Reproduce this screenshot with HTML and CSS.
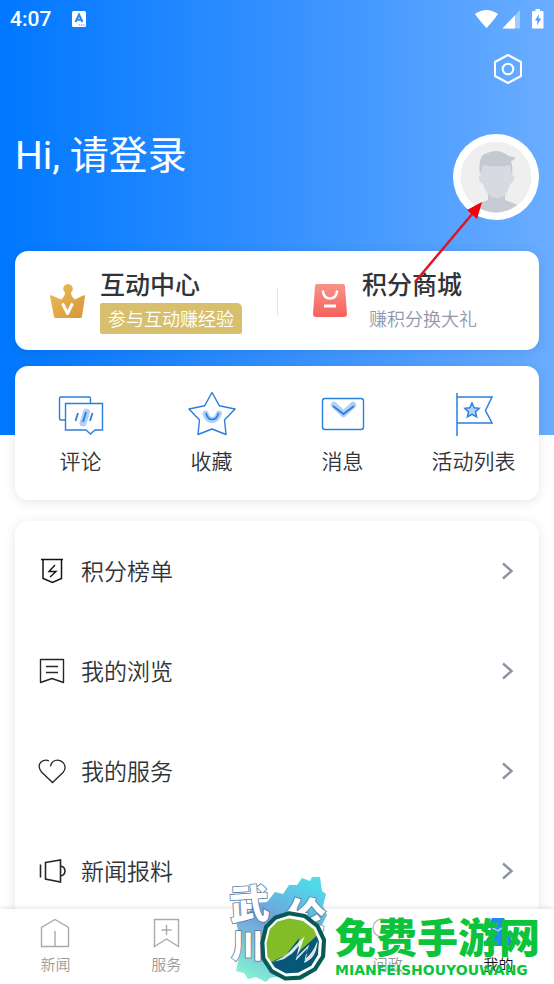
FILE: index.html
```html
<!DOCTYPE html>
<html lang="zh-CN">
<head>
<meta charset="utf-8">
<meta name="viewport" content="width=device-width, initial-scale=1">
<title>我的</title>
<link rel="stylesheet" href="styles.css">
</head>
<body>
<div class="screen">
  <main class="content">
    <div class="status">
      <span class="clock">4:07</span>
      <svg class="status-app" width="16" height="16" viewBox="0 0 16 16"><rect x="1" y="0" width="14" height="16" rx="1.5" fill="#fff"/><path d="M4.500 11 8 3.500 11.500 11M6 8.800h4" fill="none" stroke="#2a84f5" stroke-width="2"/><path d="M8 14h1.200M10.200 14h1.200M12.400 14h1.200" stroke="#2a84f5"/></svg>
      <svg width="69" height="20" viewBox="0 0 69 20"><path d="M0 5Q11.500-3 23 5Q19 11 11.500 19Q4 11 0 5z" fill="#fff"/><path d="M27.500 19.500 45 1v18.500z" fill="#fff" opacity=".4"/><path d="M27.500 19.500 40 6.200v13.300z" fill="#fff"/><path d="M57 3q0-1 1-1h2.500V0h4.500v2h2.500q1 0 1 1v15.500q0 1-1 1H58q-1 0-1-1z" fill="#fff"/><path d="m64 5-4 6.500h2.500L62 16.500l4-7h-2.500z" fill="#4b9af8"/></svg>
    </div>
    <div class="toolbar">
      <button class="icon-button" aria-label="设置"><svg width="32" height="32" viewBox="0 0 32 32" fill="none" stroke="#fff" stroke-width="2"><path d="M16 2 29 9v14l-13 7L3 23V9z" stroke-linejoin="round"/><circle cx="16" cy="16" r="5.300"/></svg></button>
    </div>
    <header class="profile">
      <h1 class="greeting">Hi, 请登录</h1>
      <a class="avatar" href="#" aria-label="请登录">
        <svg width="86" height="86" viewBox="0 0 86 86"><defs><clipPath id="face"><circle cx="43" cy="43" r="35.500"/></clipPath></defs><circle cx="43" cy="43" r="43" fill="#fff"/><circle cx="43" cy="43" r="35.500" fill="#efeff0"/><g clip-path="url(#face)"><path d="M17 86V76q4-5 10-7l8-3V55h17v11l8 3q6 2 10 7v10z" fill="#c7cbd3"/><path d="M28 30h31v11q3 0 2 4t-4 5q-3 14-13 14T30 50q-3-1-4-5t2-4z" fill="#d7dae0"/><path d="M27 41q-3-20 7-22 10-4 17 0 5 4 11 4-1 4-4 4 2 7 1 14l-2-10q-16 3-27 0z" fill="#c4c9d1"/></g></svg>
      </a>
    </header>

    <section class="card promo">
      <a class="promo-item" href="#">
        <svg width="36" height="36" viewBox="0 0 36 36"><defs><linearGradient id="gold" x2="1" y2="1"><stop stop-color="#ecbd58"/><stop offset="1" stop-color="#d7963a"/></linearGradient></defs><path d="M0 13.500q0-2 2-1l9 4q4-3 4-7a4.800 4.800 0 1 1 6 0q0 4 4 7l8-4q2-1 2 1l-3 20q0 1.500-2 1.500H6q-2 0-2-1.500z" fill="url(#gold)"/><path d="m13 21.500 4.500 9 4.500-9" fill="none" stroke="#fff" stroke-width="3" stroke-linecap="round" stroke-linejoin="round"/></svg>
        <span class="promo-text"><strong class="promo-title">互动中心</strong><span class="promo-badge">参与互动赚经验</span></span>
      </a>
      <a class="promo-item" href="#">
        <svg width="36" height="36" viewBox="0 0 36 36"><defs><linearGradient id="rose" x2="0" y2="1"><stop stop-color="#f89486"/><stop offset="1" stop-color="#f7605f"/></linearGradient></defs><path d="M5 1h26q2 0 2 2l2 28q0 3-3 3H4q-3 0-3-3L3 3q0-2 2-2z" fill="url(#rose)"/><path d="M11 8.500q1 7 7 7t7-7" fill="none" stroke="#fff" stroke-width="2.500" stroke-linecap="round"/><path d="M12 23h12" stroke="#fff" stroke-width="3"/></svg>
        <span class="promo-text"><strong class="promo-title">积分商城</strong><span class="promo-note">赚积分换大礼</span></span>
      </a>
    </section>

    <nav class="card shortcuts" aria-label="快捷入口">
      <a class="shortcut" href="#"><svg width="48" height="48" viewBox="0 0 48 48" fill="none" stroke="#2b7fdc" stroke-width="1.400"><path d="M8 34H4q-1.500 0-1.500-1.500v-20Q2.500 11 4 11h28q1.500 0 1.500 1.500V17"/><path d="M8.500 17.500h37v26.500H38l-4.500 4-4.500-4H8.500z"/><path d="m29.500 26-3.500 11" stroke="#afd0f7" stroke-width="7" stroke-linecap="round"/><path d="m21 27-2.500 8M29 26l-3 10M35.500 27l-2.500 8" stroke-width="1.800"/></svg><span>评论</span></a>
      <a class="shortcut" href="#"><svg width="48" height="48" viewBox="0 0 48 48" fill="none" stroke="#2b7fdc" stroke-width="1.400" stroke-linejoin="round"><path d="m24 6.500 7.300 13.200L47 23 36.500 34l1.500 14.500-14-5.500-14 5.500L11.500 34 1 23l15.700-3.300z"/><path d="M17.500 27.500q2 6.500 6.500 6.500t7-6.500" stroke="#afd0f7" stroke-width="6" stroke-linecap="round"/><path d="M18 27q1.500 6.500 6.200 6.500T30.500 27" stroke-width="1.700"/></svg><span>收藏</span></a>
      <a class="shortcut" href="#"><svg width="48" height="48" viewBox="0 0 48 48" fill="none" stroke="#2b7fdc" stroke-width="1.400"><rect x="3.500" y="12.500" width="41" height="31" rx="2.500"/><path d="m15 19 9.500 9 9.500-9" stroke="#afd0f7" stroke-width="6.500" stroke-linecap="round" stroke-linejoin="round"/><path d="m14 20 10.500 8L35 20" stroke-width="1.800"/></svg><span>消息</span></a>
      <a class="shortcut" href="#"><svg width="48" height="48" viewBox="0 0 48 48" fill="none" stroke="#2b7fdc" stroke-width="1.500"><path d="M7 7v43M7 11h35l-6.500 13.500L42 37H7"/><path d="m22 17 2.200 4.700 5 .6-3.600 3.500 1 5-4.600-2.500-4.600 2.500 1-5-3.600-3.500 5-.6z" fill="#afd0f7"/></svg><span>活动列表</span></a>
    </nav>

    <nav class="card menu" aria-label="我的功能">
      <a class="row" href="#"><svg width="28" height="28" viewBox="0 0 28 28" fill="none" stroke="#151515" stroke-width="1.500"><path d="M3 2.500h22M5 2.500v19l9.500 4 9-4v-19"/><path d="m17 8-6 6.500h7l-6 5.500" stroke-width="1.400"/></svg><span class="row-label">积分榜单</span><svg class="chevron" width="12" height="20" viewBox="0 0 12 20"><path d="m1 2.500 8.500 7.500L1 17.500"/></svg></a>
      <a class="row" href="#"><svg width="28" height="28" viewBox="0 0 28 28" fill="none" stroke="#252729" stroke-width="1.400"><path d="M2.500 2.500h23v23l-11.500-4-11.500 4z" stroke-linejoin="round"/><path d="M8 9.500h12M8 15.500h12"/></svg><span class="row-label">我的浏览</span><svg class="chevron" width="12" height="20" viewBox="0 0 12 20"><path d="m1 2.500 8.500 7.500L1 17.500"/></svg></a>
      <a class="row" href="#"><svg width="28" height="28" viewBox="0 0 28 28" fill="none" stroke="#252729" stroke-width="1.300"><path d="M12.500 9.500Q13 5 17 3.500q5-1.500 8.500 2.500 3.500 5-.5 9.500L14.500 25.500 3.500 15Q-1 9 3 5q4-3 8-1"/></svg><span class="row-label">我的服务</span><svg class="chevron" width="12" height="20" viewBox="0 0 12 20"><path d="m1 2.500 8.500 7.500L1 17.500"/></svg></a>
      <a class="row" href="#"><svg width="28" height="28" viewBox="0 0 28 28" fill="none" stroke="#252729" stroke-width="1.600"><path d="M2.500 7.500v13M7.500 5.500 22.500 3v22L7.500 22zM22.500 9q4.500 1 4.500 5t-4.500 5"/></svg><span class="row-label">新闻报料</span><svg class="chevron" width="12" height="20" viewBox="0 0 12 20"><path d="m1 2.500 8.500 7.500L1 17.500"/></svg></a>
    </nav>
  </main>

  <nav class="tabs" aria-label="主导航">
    <a class="tab" href="#"><svg width="32" height="32" viewBox="0 0 32 32" fill="none" stroke="#aaa" stroke-width="1.400"><path d="M2.500 29.500V10.500L16 2.500l13.500 8v19zM16 14v15"/></svg><span>新闻</span></a>
    <a class="tab" href="#"><svg width="32" height="32" viewBox="0 0 32 32" fill="none" stroke="#aaa" stroke-width="1.400"><path d="M4.500 2.500h24v27L16.500 22l-12 7.500zM16.500 8v10M11.500 13h10"/></svg><span>服务</span></a>
    <a class="tab" href="#" aria-label="首页"></a>
    <a class="tab" href="#"><svg width="32" height="32" viewBox="0 0 32 32" fill="none" stroke="#b9b9b9" stroke-width="1.400"><circle cx="10" cy="11" r="9"/><path d="M18 8q10 1 10 10t-10 9q-5 0-7-4"/></svg><span>问政</span></a>
    <a class="tab tab-current" href="#" aria-current="page"><svg width="32" height="32" viewBox="0 0 32 32"><path d="M9 1h12q5 7 2 13l6 9v6H3v-6l6-8Q5 8 9 1z" fill="#2687f5"/><path d="m9 10 5 4 7-4" fill="none" stroke="#9bcbff" stroke-width="2"/></svg><span>我的</span></a>
  </nav>

  <svg class="pointer" width="76" height="86" viewBox="0 0 76 86" aria-hidden="true"><path d="M4 81 62 12" stroke="#dc1825" stroke-width="2.500"/><path d="M71 1 56 9l10 9z" fill="#f40009"/></svg>

  <div class="mark">
    <svg class="mark-logo" width="104" height="108" viewBox="0 0 104 108" aria-hidden="true">
      <defs><linearGradient id="land" x1=".75" y1="0" x2=".3" y2="1"><stop stop-color="#4fdce8"/><stop offset=".5" stop-color="#719ddd"/><stop offset="1" stop-color="#82ecd4"/></linearGradient><clipPath id="ring"><path d="m48 42 14-4 16 3 13 10 6 14-1 16-8 13-15 8-15 1-13-7-9-13-1-16 4-16z"/></clipPath></defs>
      <path d="m93 1 2 14 4 3-3 12 4 9-5 10-3 35-23 13-26 5-4 4-10-5-8 2-4-6-8-2 3-14-3-12 2-14-2-10 6-8 8-2 5-8 12-1 8-10 8 2 6-9h8l5-7 8 3 2-4z" fill="url(#land)"/>
      <g class="brush"><text x="2" y="43" font-size="40" transform="rotate(-4 22 25)">武</text><text x="4" y="82" font-size="33">川</text><text x="59" y="56" font-size="40">伦</text></g>
      <g transform="translate(5 5) scale(.92)">
        <g clip-path="url(#ring)"><path d="M34 36h66v72H34z" fill="#80bd27"/><path d="m40 89 18-8 15-19-3 17 25-22-3 50H36z" fill="#075779"/><path d="M40 89q16-3 28-18L79 60l-6 17-4 7 15-15-6 17q10-7 15-21-1 20-15 24l4-10-14 8 3-12-15 10z" fill="#fff" opacity=".85"/><path d="m44 91 17-7 12-14-4 17 13-14-3 12-4 8 18-14-8 18-30 5z" fill="#075779"/></g>
        <path d="m48 42 14-4 16 3 13 10 6 14-1 16-8 13-15 8-15 1-13-7-9-13-1-16 4-16z" fill="none" stroke="#fff" stroke-width="5" stroke-linejoin="round"/>
        <path d="m47 40 15-5 17 3 14 11 7 15-1 18-9 14-16 9-16 1-15-8-9-14-1-17 4-17z" fill="none" stroke="#075b56" stroke-width="4.500" stroke-linejoin="round"/>
      </g>
    </svg>
    <div class="mark-text"><span class="mark-name">免费手游网</span><span class="mark-latin">MIANFEISHOUYOUWANG</span></div>
  </div>
</div>
</body>
</html>
```
FILE: styles.css
```css
* { box-sizing: border-box; }
body { margin: 0; font-family: "Noto Sans CJK SC", sans-serif; font-weight: 350; color: #303438; background: #fff; }
a { color: inherit; text-decoration: none; }
svg { display: block; flex: none; overflow: visible; }
.screen { position: relative; display: flex; flex-direction: column; height: 100vh; overflow: hidden; }
.content {
  flex: 1;
  min-height: 0;
  overflow: hidden;
  padding: 0 15px;
  background: linear-gradient(90deg, #0078ff 0%, #3490ff 50%, #6aadff 100%) top / 100% 435px no-repeat;
}
.status { display: flex; align-items: center; height: 38px; margin: 0 -5px; color: #fff; }
.clock { font: 500 21px/24px Roboto, sans-serif; }
.status-app { margin: 0 auto 0 20px; }
.toolbar { display: flex; justify-content: flex-end; height: 62px; padding-top: 15px; }
.icon-button { width: 32px; height: 32px; margin-right: 15px; padding: 0; border: 0; background: none; }
.profile { display: flex; justify-content: space-between; height: 151px; padding-top: 34px; }
.greeting { margin: 0; color: #fff; font-family: Roboto, "Noto Sans CJK SC", sans-serif; font-size: 39px; font-weight: 400; line-height: 44px; }
.avatar { height: 86px; }
.card { border-radius: 13px; background: #fff; box-shadow: 0 2px 12px rgba(0, 0, 0, .1); }
.promo { display: grid; grid-template-columns: 1fr 1fr; height: 99px; margin-bottom: 16px; }
.promo-item { display: flex; align-items: center; gap: 14px; padding-left: 35px; }
.promo-item + .promo-item { position: relative; }
.promo-item + .promo-item::before { content: ""; position: absolute; left: 0; top: 36px; width: 1px; height: 28px; background: #e2e4e8; }
.promo-text { display: flex; flex-direction: column; align-items: flex-start; gap: 4px; }
.promo-title { font-size: 25px; font-weight: 500; line-height: 32px; }
.promo-badge, .promo-note { padding: 0 7px; font-size: 18px; line-height: 31px; white-space: nowrap; }
.promo-badge { border-radius: 2px 5px 2px 2px; color: #fff; background: #d8bf6d; padding: 0 8px; }
.promo-note { color: #9298aa; }
.shortcuts { display: grid; grid-template-columns: repeat(4, 1fr); height: 134px; margin-bottom: 21px; padding-top: 20px; }
.shortcut { display: flex; flex-direction: column; align-items: center; gap: 10px; font-size: 21px; line-height: 32px; }
.menu { display: flex; flex-direction: column; }
.row { display: flex; align-items: center; gap: 15px; height: 100px; padding: 0 25px 0 23px; font-size: 23px; line-height: 32px; }
.row-label { flex: 1; padding-bottom: 2px; }
.chevron { fill: none; stroke: #8c93a3; stroke-width: 2.4; }
.tabs { position: relative; display: grid; grid-template-columns: repeat(5, 1fr); height: 75px; padding-top: 8px; background: #fff; box-shadow: 0 -1px 5px rgba(0, 0, 0, .12); }
.tab { display: flex; flex-direction: column; align-items: center; gap: 3px; color: #999; font-size: 15px; line-height: 24px; }
.tab-current { color: #111; }
.pointer { position: absolute; right: 67px; top: 201px; }
.mark { position: absolute; right: 14px; bottom: 0; display: flex; align-items: flex-end; gap: 4px; color: #0cc43c; }
.mark-text { display: flex; flex-direction: column; padding-bottom: 5px; }
.mark-name { font-size: 41px; font-weight: 900; line-height: 52px; }
.mark-latin { font: 700 14px/18px "DejaVu Sans", sans-serif; }
.brush { fill: #fff; stroke: #4a74a3; stroke-width: 1.5px; paint-order: stroke; font-weight: 900; }
```
